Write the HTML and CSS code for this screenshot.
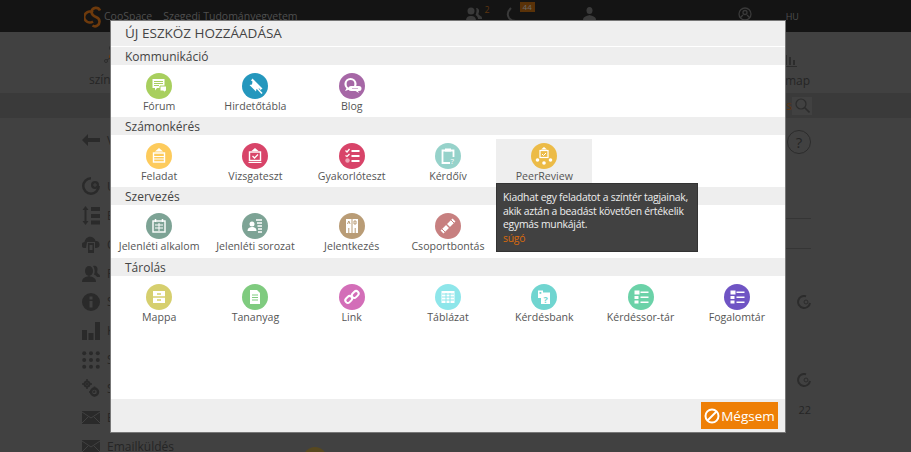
FILE: index.html
```html
<!DOCTYPE html>
<html>
<head>
  <title>CooSpace</title>
  <meta charset="utf-8"/>
  <link rel="stylesheet" href="styles.css">
</head>
<body>
  <div class="page">
    <div class="topbar">
      <svg class="logo" width="19" height="23" viewBox="0 0 19 23" fill="none" stroke="#6e3a0c" stroke-width="2.600">
        <path d="M9 7.500a5.500 5.500 0 1 0 0 9"/>
        <path d="M16 5.500a4.500 4.500 0 0 0-8.500 1c0 3 2 4.500 4.500 5.500 2.500 1 3.500 2.500 3.500 4.500a4.500 4.500 0 0 1-7 4"/>
      </svg>
      <span class="brand">CooSpace</span>
      <span class="org">Szegedi Tudományegyetem</span>
      <svg class="top-people" width="16" height="14" viewBox="0 0 16 14" fill="#3a3a3a"><circle cx="5" cy="4" r="3.500"/><path d="M0 14c0-4 2-5 5-5s5 1 5 5z"/><path d="M10 1c2.500 0 3.500 2 3 4-.5 1.500-1 2 0 3s3 1 3 3v1h-4c0-2-1-3-2.500-4 1-2 1.500-5.500.5-7z"/></svg>
      <span class="top-count">2</span>
      <svg class="top-phone" width="14" height="16" viewBox="0 0 14 16" fill="none" stroke="#3a3a3a" stroke-width="2"><path d="M5 1C2 4 1 8 3 11c1.500 2 4 3 7 3"/></svg>
      <span class="top-badge">44</span>
      <svg class="top-person" width="13" height="13" viewBox="0 0 13 13" fill="#3a3a3a"><ellipse cx="6.500" cy="3.500" rx="3" ry="3.500"/><path d="M0 13c0-3 3-4 6.500-5 3.500 1 6.500 2 6.500 5z"/></svg>
      <svg class="top-help" width="16" height="14" viewBox="0 0 16 14" fill="none" stroke="#3a3a3a" stroke-width="1.300"><circle cx="8" cy="7" r="6"/><circle cx="8" cy="5.500" r="2"/><path d="M3 11l3-3M13 11l-3-3"/></svg>
      <span class="lang">HU</span>
    </div>

    <div class="nav">
      <div class="nav-left">
        <svg class="nav-nodes" width="12" height="20" viewBox="0 0 12 20" fill="none" stroke="#2c2c2c"><circle cx="9" cy="3" r="2.500"/><circle cx="3" cy="16" r="1.500"/><circle cx="9" cy="12" r="3" fill="#6e3a0c" stroke="none"/><path d="M4 15l3-2M9 5.500V9"/></svg>
        <span>színt</span>
      </div>
      <div class="nav-right">
        <svg class="nav-bars" width="12" height="13" viewBox="0 0 12 13" fill="#2c2c2c"><rect x="0" y="1" width="2" height="10"/><rect x="4" y="3" width="2" height="8"/><rect x="8" y="6" width="2" height="5"/><rect x="0" y="12" width="12" height="1"/></svg>
        <span>map</span>
      </div>
    </div>

    <div class="searchbar">
      <span class="search-text">s</span>
      <span class="search-box">
        <svg width="15" height="15" viewBox="0 0 15 15" fill="none" stroke="#2c2c2c" stroke-width="1.200"><circle cx="6" cy="6" r="5"/><path d="M9.500 9.500l5 5" stroke-width="1.600"/></svg>
      </span>
    </div>

    <div class="content">
      <div class="side">
        <div class="side-row"><svg width="18" height="12" viewBox="0 0 18 12"><path d="M0 6l6-6v4h12v4H6v4z"/></svg><span>V</span></div>
        <div class="side-row first"><svg width="18" height="18" viewBox="0 0 18 18"><path d="M9 0a9 9 0 1 0 9 9h-2.500A6.500 6.500 0 1 1 9 2.500z"/><circle cx="13" cy="8" r="4"/><path d="M11 8h4M13 6v4" stroke="#414141"/></svg><span>Ú</span></div>
        <div class="side-row"><svg width="18" height="19" viewBox="0 0 18 19"><path d="M3.500 0l3 4H4.500v11h2l-3 4-3-4h2V4h-2z"/><rect x="9" y="1" width="9" height="4"/><rect x="9" y="8" width="9" height="4"/><rect x="9" y="14.500" width="9" height="4"/></svg><span>E</span></div>
        <div class="side-row"><svg width="18" height="17" viewBox="0 0 18 17"><path d="M4 12H3a3 3 0 0 1-.5-6C3 3 6 0 9.500 1c2 .5 3.500 2 4 4a3.500 3.500 0 0 1 1 7H13V6H5z"/><path d="M6 7h6v10H6zM7.500 9v5h3V9z" fill-rule="evenodd"/></svg><span>C</span></div>
        <div class="side-row"><svg width="18" height="17" viewBox="0 0 18 17"><ellipse cx="7" cy="6" rx="4" ry="5"/><path d="M0 17c0-4 3-5 7-6 4 1 7 2 7 6z"/><path d="M11 1c3-1 5 1 4.500 4-.5 2-.5 3 1 4 1 .5 1.500 1 1.500 3h-3c-.5-1-2-2-3-2.500 1-2 1-6-1-8.500z"/></svg><span>F</span></div>
        <div class="side-row"><svg width="18" height="18" viewBox="0 0 18 18"><path d="M9 0a9 9 0 1 1 0 18A9 9 0 0 1 9 0zM7.500 3.500v3h3v-3zM7.500 8v6.500h3V8z" fill-rule="evenodd"/></svg><span>S</span></div>
        <div class="side-row"><svg width="18" height="18" viewBox="0 0 18 18"><rect x="0" y="8" width="5" height="10"/><rect x="6.500" y="11" width="5" height="7"/><rect x="13" y="0" width="5" height="18"/></svg><span>K</span></div>
        <div class="side-row"><svg width="18" height="18" viewBox="0 0 18 18"><circle cx="2.200" cy="2.200" r="2"/><circle cx="9" cy="2.200" r="2"/><circle cx="15.800" cy="2.200" r="2"/><circle cx="2.200" cy="9" r="2"/><circle cx="9" cy="9" r="2"/><circle cx="15.800" cy="9" r="2"/><circle cx="2.200" cy="15.800" r="2"/><circle cx="9" cy="15.800" r="2"/><circle cx="15.800" cy="15.800" r="2"/></svg><span>S</span></div>
        <div class="side-row"><svg width="18" height="19" viewBox="0 0 18 19" fill="none" stroke="#2a2a2a"><circle cx="5" cy="5" r="2.500" stroke-width="2"/><circle cx="12.500" cy="13" r="3.500" stroke-width="2.500"/><path d="M5 0v10M0 5h10M12.500 7.500v11M7 13h11" stroke-dasharray="2 2" stroke-width="1.500"/></svg><span>S</span></div>
        <div class="side-row"><svg width="18" height="13" viewBox="0 0 18 13"><path d="M0 0h18v13H0z"/><path d="M0 1l9 6 9-6M0 12l6-6M18 12l-6-6" stroke="#414141" fill="none"/></svg><span>É</span></div>
        <div class="side-row"><svg width="18" height="13" viewBox="0 0 18 13"><path d="M0 0h18v13H0z"/><path d="M0 1l9 6 9-6M0 12l6-6M18 12l-6-6" stroke="#414141" fill="none"/></svg><span>Emailküldés</span></div>
      </div>

      <div class="side-right">
        <div class="help">?</div>
        <div class="rule rule-a"></div>
        <div class="rule rule-b"></div>
        <svg class="clock clock-a" width="14" height="14" viewBox="0 0 14 14" fill="none" stroke="#2c2c2c" stroke-width="2"><path d="M13 8a6 6 0 1 1-4-6.700"/><circle cx="9" cy="7" r="2" stroke-width="1"/></svg>
        <svg class="clock clock-b" width="14" height="14" viewBox="0 0 14 14" fill="none" stroke="#2c2c2c" stroke-width="2"><path d="M13 8a6 6 0 1 1-4-6.700"/><circle cx="9" cy="7" r="2" stroke-width="1"/></svg>
        <div class="count">22</div>
      </div>
    </div>
    <div class="avatar"></div>
  </div>

  <div class="modal">
    <div class="modal-title">ÚJ ESZKÖZ HOZZÁADÁSA</div>

    <div class="section">Kommunikáció</div>
    <div class="tools">
      <div class="tool"><span class="ic c-forum"><svg viewBox="0 0 26 26"><path d="M6.500 6h12v9H11l-2 2.500V15H6.500z" fill="#fff"/><path d="M8 8.500h9M8 10.500h9M8 12.500h5" stroke="#a8cf5e"/><path d="M14 13h6.500v5h-1v2l-2-2H14z" fill="#fff" stroke="#a8cf5e"/></svg></span>Fórum</div>
      <div class="tool"><span class="ic c-board"><svg viewBox="0 0 26 26"><path d="M10.500 5.500l-1.500 2 1.500 1-.5 3-2.500.5 6.500 6.500.5-2.500 3-.5 1 1.500 2-1.500z" fill="#fff"/><path d="M14 14l6 6.500" stroke="#fff" stroke-width="1.500"/></svg></span>Hirdetőtábla</div>
      <div class="tool"><span class="ic c-blog"><svg viewBox="0 0 26 26"><circle cx="11.500" cy="11" r="5" fill="none" stroke="#fff" stroke-width="2.200"/><path d="M8 14.500l-2 3.500 4.500-1.500z" fill="#fff"/><path d="M12 13h8a1 1 0 0 1 0 5h-1l1 2-3.500-2H12a1 1 0 0 1 0-5z" fill="#fff"/><path d="M13.500 15.500h6" stroke="#a667a6" stroke-dasharray="1 1"/></svg></span>Blog</div>
    </div>

    <div class="section">Számonkérés</div>
    <div class="tools">
      <div class="tool"><span class="ic c-task"><svg viewBox="0 0 26 26"><path d="M13 5l4 3.500H9z" fill="#fff"/><rect x="7.500" y="10" width="11" height="9" fill="none" stroke="#fff" stroke-width="1.400"/><path d="M8 13.500h10M8 16h10" stroke="#fff"/></svg></span>Feladat</div>
      <div class="tool"><span class="ic c-exam"><svg viewBox="0 0 26 26"><path d="M13 5l3.500 3h-7z" fill="#fff"/><rect x="7.500" y="9" width="11" height="8.500" fill="none" stroke="#fff" stroke-width="1.400"/><path d="M10.500 13l2 2 3.500-3.500" fill="none" stroke="#fff" stroke-width="1.300"/><path d="M6.500 19.500h13" stroke="#fff"/></svg></span>Vizsgateszt</div>
      <div class="tool"><span class="ic c-exam"><svg viewBox="0 0 26 26"><path d="M6.500 7.500l1.500 1.500 2.500-3" fill="none" stroke="#fff" stroke-width="1.300"/><path d="M6.500 12.500l1.500 1 2.500-2.500" fill="none" stroke="#fff" stroke-width="1.300"/><circle cx="8.500" cy="17.500" r="2.200" fill="#f0a5b8"/><path d="M12.500 8h8M12.500 13h8M12.500 18h8" stroke="#fff" stroke-width="1.800"/></svg></span>Gyakorlóteszt</div>
      <div class="tool"><span class="ic c-survey"><svg viewBox="0 0 26 26"><path d="M15 20H7.500V7.500h11V14" fill="none" stroke="#fff" stroke-width="1.800"/><rect x="10" y="5.500" width="6" height="3" fill="#fff"/><text x="15.500" y="21" class="ic-mark">?</text></svg></span>Kérdőív</div>
      <div class="tool active"><span class="ic c-peer"><svg viewBox="0 0 26 26"><path d="M13 4l3 2.500h-6z" fill="#fff"/><rect x="9" y="7.500" width="8" height="7" fill="none" stroke="#fff" stroke-width="1.200"/><path d="M11 11l1.500 1.500 2.500-2.500" fill="none" stroke="#fff"/><circle cx="6.500" cy="17" r="1.800" fill="#fff"/><circle cx="13" cy="20" r="1.800" fill="#fff"/><circle cx="19.500" cy="17" r="1.800" fill="#fff"/></svg></span>PeerReview</div>
    </div>

    <div class="section">Szervezés</div>
    <div class="tools">
      <div class="tool"><span class="ic c-att"><svg viewBox="0 0 26 26"><rect x="7" y="8" width="12" height="11" fill="none" stroke="#fff" stroke-width="1.400"/><path d="M9.500 6v3M16.500 6v3" stroke="#fff" stroke-width="1.500"/><path d="M13 10v8M9 12h8M9 15h8" stroke="#fff"/></svg></span>Jelenléti alkalom</div>
      <div class="tool"><span class="ic c-att"><svg viewBox="0 0 26 26"><circle cx="10" cy="11" r="2.500" fill="#fff"/><path d="M5.500 18c0-3 2-4 4.500-4s4.500 1 4.500 4z" fill="#fff"/><path d="M14 7h6M15 10h5M15.500 13h4.500M16 16h4M16 19h4" stroke="#fff" stroke-width="1.500"/></svg></span>Jelenléti sorozat</div>
      <div class="tool"><span class="ic c-join"><svg viewBox="0 0 26 26"><rect x="7" y="6" width="5.500" height="14" fill="#fff"/><rect x="13.500" y="6" width="5.500" height="14" fill="#fff"/><path d="M8.500 11l1.300-3 1.300 3M15 8h2v3h-2zM9.800 20v-5M16.200 20v-5" fill="none" stroke="#b99c76"/></svg></span>Jelentkezés</div>
      <div class="tool"><span class="ic c-split"><svg viewBox="0 0 26 26"><path d="M7 19L19 7" stroke="#fff" stroke-width="4"/><path d="M6 15l5 5M15 6l5 5" stroke="#c78080"/><path d="M9 9l8 8" stroke="#c78080" stroke-width="1.500"/></svg></span>Csoportbontás</div>
    </div>

    <div class="section">Tárolás</div>
    <div class="tools">
      <div class="tool"><span class="ic c-folder"><svg viewBox="0 0 26 26"><rect x="7" y="7" width="12" height="12" fill="#fff"/><path d="M7 13h12" stroke="#d6cf6e" stroke-width="1.500"/><path d="M11 10h4M11 16h4" stroke="#d6cf6e" stroke-width="1.500"/></svg></span>Mappa</div>
      <div class="tool"><span class="ic c-doc"><svg viewBox="0 0 26 26"><path d="M8 6h7l3 3v11H8z" fill="#fff"/><path d="M10 11h6M10 13.500h6M10 16h6" stroke="#7fcb7f"/></svg></span>Tananyag</div>
      <div class="tool"><span class="ic c-link"><svg viewBox="0 0 26 26" fill="none" stroke="#fff" stroke-width="2"><rect x="6" y="13" width="7.500" height="5" rx="2.500" transform="rotate(-45 9.700 15.500)"/><rect x="12.500" y="8" width="7.500" height="5" rx="2.500" transform="rotate(-45 16.200 10.500)"/></svg></span>Link</div>
      <div class="tool"><span class="ic c-table"><svg viewBox="0 0 26 26"><rect x="6.500" y="7" width="13" height="12" fill="#fff"/><path d="M7 10h12M7 13h12M7 16h12M11 9v10M15 9v10" stroke="#8ee6ea"/></svg></span>Táblázat</div>
      <div class="tool"><span class="ic c-bank"><svg viewBox="0 0 26 26"><path d="M7 6.500h5v2h7V20H10v-6H7z" fill="#fff"/><rect x="8.500" y="8" width="1.800" height="1.800" fill="#70d5d0"/><text x="12.500" y="18.500" class="ic-q">?</text></svg></span>Kérdésbank</div>
      <div class="tool"><span class="ic c-qlist"><svg viewBox="0 0 26 26"><use href="#list-lines"/></svg></span>Kérdéssor-tár</div>
      <div class="tool"><span class="ic c-terms"><svg viewBox="0 0 26 26"><use href="#list-lines"/></svg></span>Fogalomtár</div>
    </div>

    <div class="tooltip">
      Kiadhat egy feladatot a színtér tagjainak, akik aztán a beadást követően értékelik egymás munkáját.
      <div class="tip-link">súgó</div>
    </div>

    <div class="modal-footer">
      <div class="cancel">
        <svg width="16" height="16" viewBox="0 0 16 16" fill="none" stroke="#fff" stroke-width="2"><circle cx="8" cy="8" r="6.500"/><path d="M3.500 12.500l9-9"/></svg>
        Mégsem
      </div>
    </div>
  </div>

  <svg class="defs" width="0" height="0">
    <defs>
      <g id="list-lines" fill="#fff">
        <rect x="6.500" y="6.500" width="5" height="4"/>
        <rect x="6.500" y="12" width="4" height="3"/>
        <rect x="6.500" y="16.500" width="4" height="3"/>
        <rect x="12.500" y="7.500" width="8" height="1.500"/>
        <rect x="12.500" y="12.500" width="8" height="1.500"/>
        <rect x="12.500" y="17.500" width="8" height="1.500"/>
      </g>
    </defs>
  </svg>
</body>
</html>
```

FILE: styles.css
```css
html, body {
	margin: 0;
	padding: 0;
	height: 100%;
	overflow: hidden;
	background: #414141;
	font-family: "Open Sans", "Liberation Sans", sans-serif;
}
.defs {
	position: absolute;
}

/* dimmed page behind the dialog */
.page {
	position: relative;
	height: 452px;
	overflow: hidden;
	color: #252525;
	font-size: 12px;
}
.topbar {
	height: 32px;
	background: #141414;
	display: flex;
	align-items: center;
	padding-left: 84px;
	color: #4f4f4f;
	font-size: 10.500px;
}
.logo {
	margin-right: 1px;
}
.brand {
	margin-right: 11px;
}
.top-people {
	margin-left: 168px;
	margin-top: -4px;
}
.top-count {
	margin: -14px 0 0 3px;
	color: #5d3510;
	font-size: 9px;
}
.top-phone {
	margin: -2px 0 0 16px;
}
.top-badge {
	width: 15px;
	height: 10px;
	margin: -18px 0 0 0;
	background: #5a3208;
	color: #6b6b6b;
	font-size: 8px;
	line-height: 10px;
	text-align: center;
}
.top-person {
	margin: -6px 0 0 48px;
}
.top-help {
	margin: -5px 0 0 141px;
}
.lang {
	margin-left: 33px;
	font-size: 9px;
}
.nav {
	height: 61px;
	display: flex;
	justify-content: space-between;
	padding: 0 105px 0 89px;
	box-sizing: border-box;
}
.nav-left, .nav-right {
	display: flex;
	flex-direction: column;
	align-items: flex-end;
	padding-top: 13px;
}
.nav-nodes {
	margin-bottom: 6px;
}
.nav-right {
	padding-top: 22px;
	align-items: flex-start;
	width: 21px;
}
.nav-bars {
	margin-bottom: 5px;
}
.searchbar {
	height: 25px;
	background: #3a3a3a;
	display: flex;
	justify-content: flex-end;
	align-items: center;
	padding-right: 99px;
}
.search-text {
	color: #5d3510;
}
.search-box {
	height: 17px;
	padding: 1px 2px 0 3px;
	background: #414141;
}
.content {
	display: flex;
	justify-content: space-between;
	padding: 0 100px 0 82px;
}
.side {
	padding-top: 8px;
}
.side-row {
	height: 28.900px;
	display: flex;
	align-items: center;
	white-space: nowrap;
	fill: #2a2a2a;
}
.side-row svg {
	width: 18px;
	flex: none;
	margin-right: 7px;
}
.side-row.first {
	margin-top: 17px;
}
.side-right {
	width: 26px;
	display: flex;
	flex-direction: column;
	align-items: flex-end;
}
.help {
	width: 24px;
	height: 24px;
	margin-top: 12px;
	border: 1px solid #2c2c2c;
	border-radius: 50%;
	box-sizing: border-box;
	text-align: center;
	line-height: 22px;
	font-size: 15px;
}
.rule {
	width: 100%;
	height: 1px;
	background: #353535;
}
.rule-a {
	margin-top: 64px;
}
.rule-b {
	margin-top: 29px;
}
.clock-a {
	margin-top: 46px;
}
.clock-b {
	margin-top: 64px;
}
.count {
	margin-top: 15px;
	line-height: 16px;
	font-size: 11px;
}
.avatar {
	position: absolute;
	left: 303px;
	top: 447px;
	width: 24px;
	height: 24px;
	border-radius: 50%;
	background: #57481f;
}

/* dialog */
.modal {
	position: absolute;
	left: 110px;
	top: 20px;
	width: 674px;
	height: 411px;
	background: #fff;
	border: 1px solid #777;
	color: #555;
}
.modal-title {
	height: 25px;
	background: #efefef;
	padding-left: 14px;
	font-size: 13.500px;
	line-height: 25px;
	color: #444;
}
.section {
	height: 18px;
	margin-top: 0.4px;
	background: #eee;
	padding-left: 14px;
	font-size: 12px;
	line-height: 20px;
	color: #444;
}
.modal-title + .section {
	margin-top: 0.6px;
}
.tools {
	display: grid;
	grid-template-columns: repeat(7, 1fr);
	padding: 4px 0;
	height: 44px;
}
.tool {
	height: 44px;
	padding-top: 4px;
	box-sizing: border-box;
	display: flex;
	flex-direction: column;
	align-items: center;
	font-size: 10.600px;
	line-height: 14px;
	white-space: nowrap;
}
.tool.active {
	background: #eee;
}
.ic {
	width: 26px;
	height: 26px;
	border-radius: 50%;
	display: block;
}
.ic svg {
	display: block;
	width: 26px;
	height: 26px;
}
.ic-mark {
	font-size: 8px;
	fill: #fff;
}
.ic-q {
	font-size: 9px;
	font-weight: bold;
	fill: #70d5d0;
}
.c-forum { background: #a8cf5e; }
.c-board { background: #2497bd; }
.c-blog { background: #a667a6; }
.c-task { background: #fdcb5c; }
.c-exam { background: #d84469; }
.c-survey { background: #96d2ca; }
.c-peer { background: #ecbb47; }
.c-att { background: #7da395; }
.c-join { background: #b99c76; }
.c-split { background: #c78080; }
.c-folder { background: #d6cf6e; }
.c-doc { background: #7fcb7f; }
.c-link { background: #d36eb8; }
.c-table { background: #8ee6ea; }
.c-bank { background: #70d5d0; }
.c-qlist { background: #6bd2a8; }
.c-terms { background: #6f54c4; }

.tooltip {
	position: absolute;
	left: 385px;
	top: 162px;
	width: 202px;
	height: 69px;
	padding: 7px 6px;
	box-sizing: border-box;
	background: #414141;
	border: 1px solid #333;
	color: #eee;
	font-size: 10.400px;
	letter-spacing: -0.25px;
	line-height: 13.500px;
}
.tip-link {
	color: #d96a0c;
}
.modal-footer {
	position: absolute;
	left: 0;
	right: 0;
	bottom: 0;
	height: 33px;
	background: #eee;
	display: flex;
	justify-content: flex-end;
	align-items: center;
	padding-right: 7px;
}
.cancel {
	height: 27px;
	width: 77px;
	box-sizing: border-box;
	background: #ee7f06;
	color: #fff;
	font-size: 13.500px;
	display: flex;
	align-items: center;
	justify-content: center;
	gap: 1px;
}
```
